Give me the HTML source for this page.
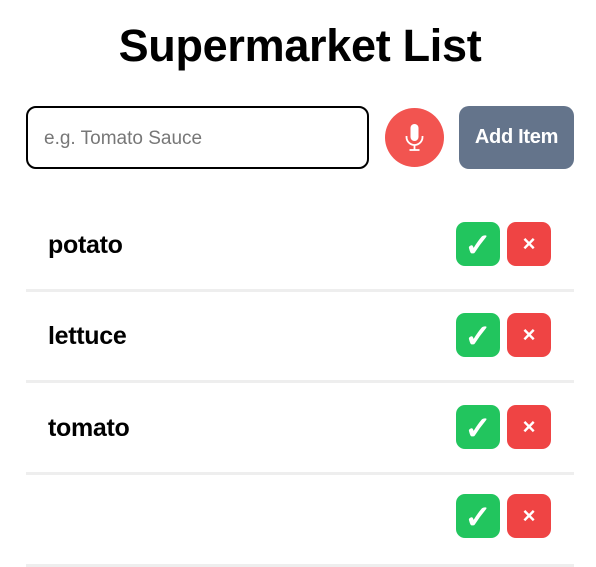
<!DOCTYPE html>
<html><head><style>
body{margin:0;width:596px;height:497px;overflow:hidden;background:#fff;font-family:"Liberation Sans",sans-serif;}
h1{position:absolute;left:0;width:600px;top:20px;margin:0;text-align:center;font-size:45px;font-weight:bold;color:#000;letter-spacing:-0.3px;}
.inp{position:absolute;left:26px;top:106px;border:2px solid #000;border-radius:10px;width:339px;height:59px;}
.inp span{position:absolute;left:16px;top:20px;font-size:19px;color:#777;}
.mic{position:absolute;left:385px;top:108px;width:59px;height:59px;border-radius:50%;background:#f25450;}
.add{position:absolute;left:459px;top:106px;width:115px;height:63px;border-radius:10px;background:#64748b;color:#fff;font-weight:bold;font-size:20px;line-height:63px;text-align:center;letter-spacing:-0.3px;}
.row{position:absolute;left:26px;width:548px;height:90px;border-bottom:3px solid #eee;}
.row b{position:absolute;left:22px;top:32px;font-size:25px;letter-spacing:-0.3px;}
.g,.r{position:absolute;top:23px;width:44px;height:44px;border-radius:9px;color:#fff;text-align:center;}
.g{left:430px;background:#22c55e;font-size:32px;line-height:46px;font-weight:bold;}
.r{left:481px;background:#ef4444;font-size:22px;line-height:44px;font-weight:bold;}
</style></head><body>
<h1>Supermarket List</h1>
<div class="inp"><span>e.g. Tomato Sauce</span></div>
<div class="mic"><svg width="59" height="59" viewBox="0 0 59 59"><rect x="25.5" y="16" width="8" height="17" rx="4" fill="#fff"/><path d="M21.5 28v1a8 8 0 0 0 16 0v-1M29.5 37v5M24.5 42h10" stroke="#fff" stroke-width="1.8" fill="none"/></svg></div>
<div class="add">Add Item</div>
<div class="row" style="top:199px"><b>potato</b><div class="g">✓</div><div class="r">×</div></div>
<div class="row" style="top:290px"><b>lettuce</b><div class="g">✓</div><div class="r">×</div></div>
<div class="row" style="top:382px"><b>tomato</b><div class="g">✓</div><div class="r">×</div></div>
<div class="row" style="top:474px"><div class="g" style="top:20px">✓</div><div class="r" style="top:20px">×</div></div>
</body></html>
